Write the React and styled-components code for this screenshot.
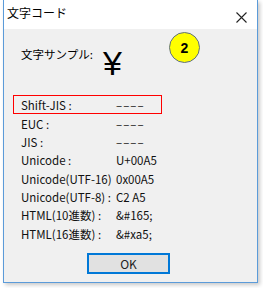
import styled, { createGlobalStyle } from "styled-components";

const GlobalStyle = createGlobalStyle`
  html, body {
    margin: 0;
    padding: 0;
    background: #ffffff;
  }
  body {
    font-family: "Noto Sans CJK JP", "Liberation Sans", sans-serif;
  }
`;

const Page = styled.div`
  width: 263px;
  height: 288px;
  padding-left: 3px;
  box-sizing: border-box;
  overflow: hidden;
`;

const Window = styled.div`
  width: 255px;
  height: 283px;
  box-sizing: border-box;
  border: 1px solid #5b9bd9;
  border-top: none;
  background: #f0f0f0;
  box-shadow: 2px 2px 4px rgba(0, 0, 0, 0.22);
  display: flex;
  flex-direction: column;
`;

const TitleBar = styled.div`
  height: 29px;
  background: #ffffff;
  display: flex;
  align-items: center;
  justify-content: space-between;
  padding: 0 10px 0 3px;
  flex-shrink: 0;
`;

const Title = styled.span`
  font-size: 12px;
  color: #000;
  margin-top: -4px;
`;

const Close = styled.svg`
  width: 11px;
  height: 11px;
  margin-top: 5px;
`;

const Body = styled.div`
  flex: 1;
  display: flex;
  flex-direction: column;
  padding: 14px 0 0 9px;
`;

const SampleRow = styled.div`
  display: flex;
  align-items: flex-start;
  height: 52px;
`;

const SampleLabel = styled.span`
  font-size: 11.5px;
  margin: 3px 0 0 8px;
  width: 82px;
`;

const Yen = styled.span`
  font-family: "Liberation Sans", sans-serif;
  font-size: 34px;
  line-height: 34px;
  font-weight: 500;
  margin-top: 3px;
`;

const Badge = styled.div`
  width: 29px;
  height: 29px;
  border-radius: 50%;
  background: #ffff00;
  border: 1px solid #5f7080;
  display: flex;
  align-items: center;
  justify-content: center;
  font-family: "Liberation Sans", sans-serif;
  font-weight: bold;
  font-size: 14px;
  margin: -11px 0 0 47px;
`;

const List = styled.div`
  display: flex;
  flex-direction: column;
`;

const Highlight = styled.div`
  width: 149px;
  box-sizing: border-box;
  border: 1px solid rgb(255, 0, 0);
  margin-bottom: 0.7px;
`;

const Row = styled.div`
  display: flex;
  align-items: center;
  height: ${(p) => (p.$inBox ? "17px" : "18.3px")};
  padding-left: ${(p) => (p.$inBox ? "7px" : "8px")};
  font-size: 11.5px;
  color: #111;
  white-space: nowrap;
`;

const Label = styled.span`
  width: 95px;
  flex-shrink: 0;
`;

const Value = styled.span`
  letter-spacing: ${(p) => (p.$dash ? "1px" : "0")};
`;

const Footer = styled.div`
  display: flex;
  justify-content: center;
  padding: 10px 0 0 0;
  margin-left: -9px;
`;

const OkButton = styled.button`
  width: 83px;
  height: 21px;
  box-sizing: border-box;
  background: #e1e1e1;
  border: 2px solid #0078d7;
  font-family: "Noto Sans CJK JP", "Liberation Sans", sans-serif;
  font-size: 12px;
  color: #222;
  padding: 0;
  margin-left: -4px;
`;

const rows = [
  ["EUC :", "––––"],
  ["JIS :", "––––"],
  ["Unicode :", "U+00A5"],
  ["Unicode(UTF-16)", "0x00A5"],
  ["Unicode(UTF-8) :", "C2  A5"],
  ["HTML(10進数) :", "&#165;"],
  ["HTML(16進数) :", "&#xa5;"],
];

export default function App() {
  return (
    <Page>
      <GlobalStyle />
      <Window>
        <TitleBar>
          <Title>文字コード</Title>
          <Close viewBox="0 0 11 11">
            <path d="M0.5 0.5 L10.5 10.5 M10.5 0.5 L0.5 10.5" stroke="#222" strokeWidth="1.1" />
          </Close>
        </TitleBar>
        <Body>
          <SampleRow>
            <SampleLabel>文字サンプル:</SampleLabel>
            <Yen>¥</Yen>
            <Badge>2</Badge>
          </SampleRow>
          <List>
            <Highlight>
              <Row $inBox>
                <Label>Shift-JIS :</Label>
                <Value $dash>––––</Value>
              </Row>
            </Highlight>
            {rows.map(([label, value]) => (
              <Row key={label}>
                <Label>{label}</Label>
                <Value $dash={value.startsWith("–")}>{value}</Value>
              </Row>
            ))}
          </List>
          <Footer>
            <OkButton>OK</OkButton>
          </Footer>
        </Body>
      </Window>
    </Page>
  );
}
